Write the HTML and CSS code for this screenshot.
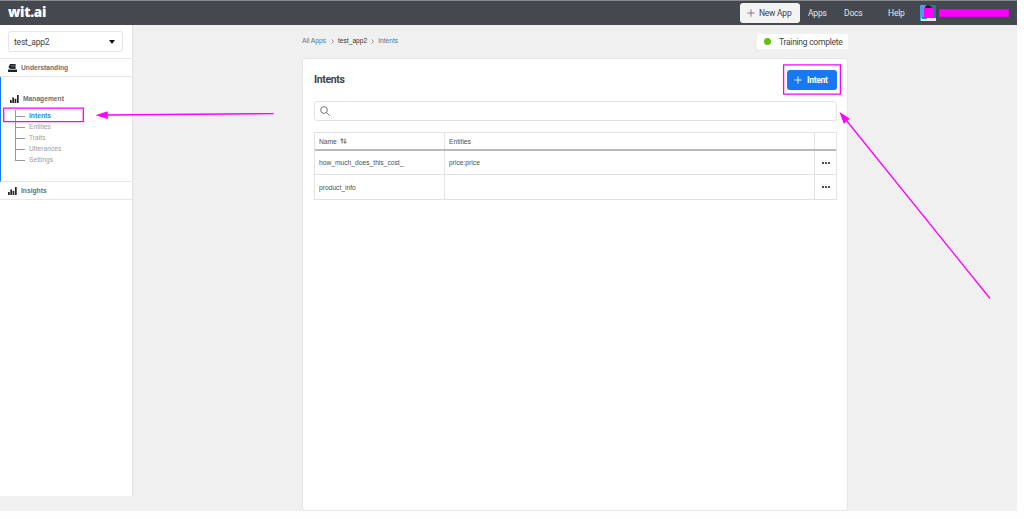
FILE: index.html
```
<!DOCTYPE html>
<html lang="en">
<head>
<meta charset="utf-8">
<title>wit.ai</title>
<link rel="stylesheet" href="styles.css">
</head>
<body>
<div class="app">
  <header class="topbar">
    <div class="logo">wit.ai</div>
    <nav class="nav">
      <button class="new-app"><svg class="plus" viewBox="0 0 8 8"><path d="M4 .3v7.4M.3 4h7.4"/></svg><span>New App</span></button>
      <a class="apps">Apps</a>
      <a class="docs">Docs</a>
      <a class="help">Help</a>
      <svg class="avatar" viewBox="0 0 16 16"><path fill="#4a9fe0" d="M0 0h16v16H0z"/><path fill="#287399" d="M11 0h5v13h-5z"/><path fill="#202226" d="M5 3q0-3 3-3t4 3v2H5z"/><path fill="#e9e9e9" d="M1 13h15v3H1z"/><path fill="#2b80bd" d="M2 12h5v2H2z"/><path fill="#f0f" d="M4 3h10v10H4z"/></svg>
      <span class="redacted"></span>
    </nav>
  </header>
  <div class="body">
    <aside class="sidebar">
      <div class="picker"><div class="select"><span>test_app2</span><i class="caret"></i></div></div>
      <div class="section understanding">
        <svg class="icon-u" viewBox="0 0 9 8"><path d="M1.8 0h5.8v4.9H1.8zM.8 1.5h2v2.8h-2zM0 5.500h9V8H0z"/><path class="cut" d="M3 2h4M1.500 5.200h6"/></svg>
        <span>Understanding</span>
      </div>
      <div class="section management">
        <div class="group-title"><svg class="bars" viewBox="0 0 9 8"><path d="M0 5h1.700v3H0zM2.300 2.600h1.700V8H2.300zM4.600 3.800h1.700V8H4.600zM7 0h1.700v8H7z"/></svg><span>Management</span></div>
        <ul class="tree">
          <li class="active">Intents</li>
          <li>Entities</li>
          <li>Traits</li>
          <li>Utterances</li>
          <li>Settings</li>
        </ul>
      </div>
      <div class="section insights">
        <svg class="bars" viewBox="0 0 9 8"><path d="M0 5h1.700v3H0zM2.300 2.600h1.700V8H2.300zM4.600 3.800h1.700V8H4.600zM7 0h1.700v8H7z"/></svg>
        <span>Insights</span>
      </div>
    </aside>
    <main class="main">
      <div class="main-head">
        <div class="crumbs"><a>All Apps</a><svg viewBox="0 0 3 5"><path d="M.5.5l2 2-2 2"/></svg><b>test_app2</b><svg viewBox="0 0 3 5"><path d="M.5.5l2 2-2 2"/></svg><a>Intents</a></div>
        <div class="status"><i></i><span>Training complete</span></div>
      </div>
      <section class="panel">
        <div class="panel-head">
          <h1>Intents</h1>
          <button class="add"><svg class="plus" viewBox="0 0 8 8"><path d="M4 .3v7.4M.3 4h7.4"/></svg><span>Intent</span></button>
        </div>
        <div class="search"><svg viewBox="0 0 10 10"><circle cx="4" cy="4" r="3.4"/><path d="M6.5 6.500L9.600 9.600"/></svg></div>
        <div class="table">
          <div class="row head"><div>Name <svg class="sort" viewBox="0 0 7 6"><path d="M2 5.500V.8M.4 2.300L2 .7l1.600 1.600M5 .5v4.700M3.600 3.700L5 5.300l1.500-1.600"/></svg></div><div>Entities</div><div></div></div>
          <div class="row first"><div>how_much_does_this_cost_</div><div>price:price</div><div class="more"><i></i><i></i><i></i></div></div>
          <div class="row"><div>product_info</div><div></div><div class="more"><i></i><i></i><i></i></div></div>
        </div>
      </section>
    </main>
  </div>
</div>
<svg class="annotations" viewBox="0 0 1024 519">
  <path class="mark" d="M3.700 108.200h79.600v13.400H3.700zM783.600 64.800h56.800v29.400h-56.800z"/>
  <path class="mark" d="M105 115L273.500 113.600M846 120L990 298.500"/>
  <path class="tip" d="M95.500 115.200L107.800 111.300V119zM839.500 112L849.800 118.800L843.700 123.800z"/>
</svg>
</body>
</html>
```

FILE: styles.css
```
* { box-sizing: border-box; }
body { margin: 0; background: #fefefe; font-family: "Liberation Sans", Arial, sans-serif; font-size: 6.7px; color: #4b4f52; overflow: hidden; }
button { font: inherit; border: 0; padding: 0; }
h1, ul { margin: 0; padding: 0; }
svg { display: block; flex: none; }

.app { width: 1017px; height: 511px; background: #f0f0f0; display: flex; flex-direction: column; }
.topbar { height: 25px; flex: none; background: #444950; border-top: 1px solid #888a8c; display: flex; justify-content: space-between; padding: 0 8px; color: #e4e6e8; font-family: Roboto, sans-serif; font-size: 8.5px; letter-spacing: -.18px; }
.logo { font: 800 13.500px/23px "Open Sans", sans-serif; color: #fff; letter-spacing: -.25px; }
.nav { display: flex; align-items: center; }
.new-app { width: 60px; height: 20px; border-radius: 3px; background: #f3f3f3; color: #3c4146; display: flex; align-items: center; padding-left: 7px; gap: 4px; letter-spacing: -.25px; }
.plus { width: 8px; height: 8px; fill: none; stroke: currentColor; stroke-width: .9; }
.new-app .plus { stroke: #777; }
.apps { margin-left: 8px; width: 36px; }
.docs { width: 44px; }
.help { width: 32px; }
.avatar { width: 16px; height: 16px; margin-right: 3px; }
.redacted { width: 70px; height: 8px; background: #f0f; border: 1px solid #d80bdd; }

.body { flex: 1; display: flex; min-height: 0; }
.sidebar { width: 133px; height: 471px; background: #fff; border-right: 1px solid #e2e2e2; }
.picker { height: 34px; padding: 6px 9px 0 8px; border-bottom: 1px solid #e6e6e6; }
.select { height: 21px; border: 1px solid #e3e4e6; border-radius: 3px; display: flex; align-items: center; justify-content: space-between; padding: 0 7px 0 5px; font: 8.5px Roboto, sans-serif; letter-spacing: -.2px; color: #3c4043; }
.caret { border: 3.5px solid transparent; border-top: 4px solid #111; border-bottom: 0; }
.section { border-bottom: 1px solid #e6e6e6; font-weight: bold; color: #6b6e71; }
.understanding, .insights { height: 18px; display: flex; align-items: center; padding: 0 0 1px 8px; gap: 4px; }
.icon-u, .bars { width: 9px; height: 8px; margin-top: 2px; fill: #202327; }
.cut { stroke: #fff; stroke-width: .4; }
.management { height: 105px; border-left: 1px solid #1877f2; padding: 16px 0 0 9px; }
.group-title { display: flex; align-items: center; gap: 4px; height: 10px; }
.tree { list-style: none; margin-left: 5px; padding-top: 7px; }
.tree li { height: 11px; line-height: 11px; padding-left: 14px; font-weight: normal; color: #9b9ea2; background: linear-gradient(#999, #999) 0 0 / 1px 100% no-repeat, linear-gradient(#999, #999) 0 6px / 10px 1px no-repeat; }
.tree li:last-child { background-size: 1px 7px, 10px 1px; }
.tree li.active { color: #2d88e8; font-weight: bold; }

.main { width: 546px; margin-left: 169px; display: flex; flex-direction: column; }
.main-head { height: 33px; display: flex; justify-content: space-between; padding-top: 9px; }
.crumbs { display: flex; height: 13px; align-items: center; font-size: 6.65px; color: #527698; }
.crumbs svg { width: 3px; height: 5px; margin: 2px 4px 0 5px; fill: none; stroke: #666; stroke-width: .7; }
.crumbs b { font-weight: normal; color: #303438; }
.crumbs b + svg { margin-left: 4px; }
.status { height: 15px; width: 91px; background: #fff; border-radius: 2px; display: flex; align-items: center; padding-left: 7px; gap: 8px; font: 8.5px Roboto, sans-serif; letter-spacing: -.26px; white-space: nowrap; color: #444; }
.status i { width: 7px; height: 7px; border-radius: 50%; background: #65bd16; }
.panel { flex: 1; background: #fff; border: 1px solid #e6e6e6; border-radius: 3px; padding: 11px 10px 0 11px; }
.panel-head { display: flex; justify-content: space-between; height: 31px; }
h1 { font: bold 10.5px/20px Roboto, sans-serif; letter-spacing: -.35px; color: #3f4448; }
.add { width: 50px; height: 20px; background: #1877f2; color: #fff; border-radius: 3px; display: flex; align-items: center; padding-left: 7px; gap: 5px; font: bold 8.6px Roboto, sans-serif; letter-spacing: -.35px; }
.search { height: 20px; border: 1px solid #e2e2e2; border-radius: 3px; padding: 4px 5px; }
.search svg { width: 10px; height: 10px; fill: none; stroke: #555; stroke-width: .8; }
.table { margin-top: 11px; border: 1px solid #e3e3e3; border-bottom: 0; }
.row { display: grid; grid-template-columns: 129px 370px 1fr; height: 25px; border-bottom: 1px solid #e3e3e3; }
.row > div { display: flex; align-items: center; padding-left: 4px; }
.row > div + div { border-left: 1px solid #e3e3e3; }
.head { height: 18px; border-bottom: 2px solid #b8b9b9; }
.first { height: 24px; }
.sort { width: 7px; height: 6px; margin-left: 3px; fill: none; stroke: #444; stroke-width: .8; }
.row > .more { padding-left: 7px; gap: 1px; }
.more i { width: 2px; height: 2px; background: #444; border-radius: 25%; }

.annotations { position: absolute; left: 0; top: 0; width: 1024px; height: 519px; pointer-events: none; }
.mark { fill: none; stroke: #f0f; stroke-width: 1.3; }
.tip { fill: #f0f; }
```
